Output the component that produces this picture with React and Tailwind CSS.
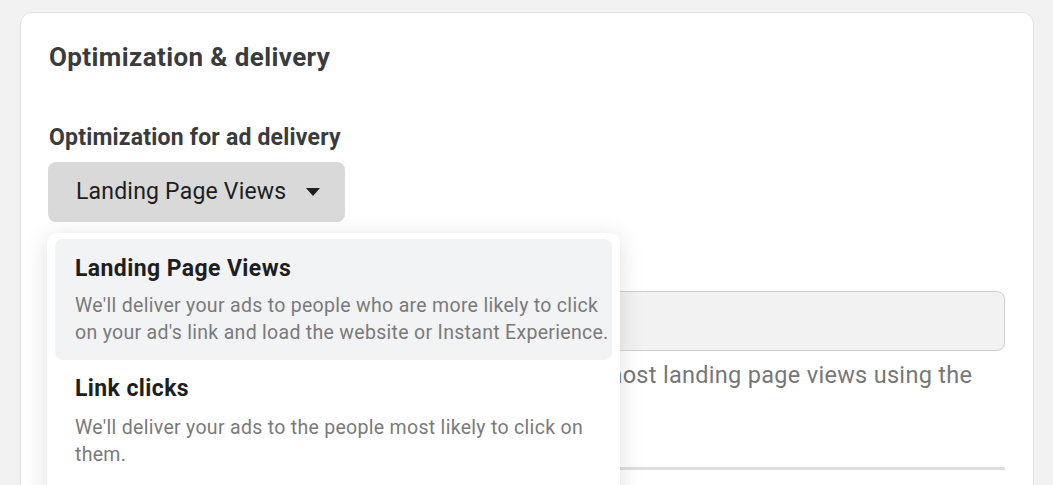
export default function App() {
  return (
    <div className="min-h-screen bg-[#f2f2f2] overflow-hidden font-['Roboto',sans-serif] pl-[20px] pr-[19px] pt-[12px]">
      <div className="relative bg-white rounded-t-[12px] border border-[#e2e2e2] h-[520px] px-[28px] pt-[28px]">
        <h2 className="text-[26px] font-bold text-[#3a3b3c] leading-[32px] tracking-[0.4px]">Optimization &amp; delivery</h2>
        <h3 className="mt-[51px] text-[23px] font-bold text-[#3a3b3c] leading-[28px] tracking-[0.2px]">Optimization for ad delivery</h3>
        <div className="mt-[10px] -ml-[1px] flex items-center w-[297px] h-[60px] rounded-[8px] bg-[#d9d9d9] pl-[28px] gap-[19px]">
          <span className="text-[23px] text-[#1c1e21] tracking-[0.2px]">Landing Page Views</span>
          <svg width="16" height="10" viewBox="0 0 16 10">
            <path d="M1 1 L15 1 L8 9 Z" fill="#1c1e21" />
          </svg>
        </div>
        <div className="mt-[69px] -ml-[1px] h-[60px] rounded-[8px] bg-[#f2f2f2] border border-[#cfcfcf]" />
        <p className="mt-[9px] text-[23.5px] text-[#777] leading-[30px] tracking-[0.3px]">
          We'll aim to spend your planned budget and get the most landing page views using the lowest cost.
        </p>
        <div className="mt-[47px] h-[3px] bg-[#dedede]" />

        <div className="absolute left-[26px] top-[220px] w-[573px] h-[300px] bg-white rounded-[10px] shadow-[0_4px_24px_rgba(0,0,0,0.13)] px-[8px] pt-[6px]">
          <div className="rounded-[8px] bg-[#f2f3f5] pl-[20px] pt-[16px] pb-[14px]">
            <div className="text-[23px] font-bold text-[#1c1e21] leading-[28px] tracking-[0.4px]">Landing Page Views</div>
            <p className="mt-[9px] text-[19.5px] text-[#7a7a7a] leading-[27px] tracking-[0.3px]">
              We'll deliver your ads to people who are more likely to click on your ad's link and load the website or Instant Experience.
            </p>
          </div>
          <div className="pl-[20px] pr-[20px] pt-[15px]">
            <div className="text-[23px] font-bold text-[#1c1e21] leading-[28px] tracking-[0.4px]">Link clicks</div>
            <p className="mt-[11px] text-[19.5px] text-[#7a7a7a] leading-[27px] tracking-[0.3px]">
              We'll deliver your ads to the people most likely to click on them.
            </p>
          </div>
        </div>
      </div>
    </div>
  );
}
